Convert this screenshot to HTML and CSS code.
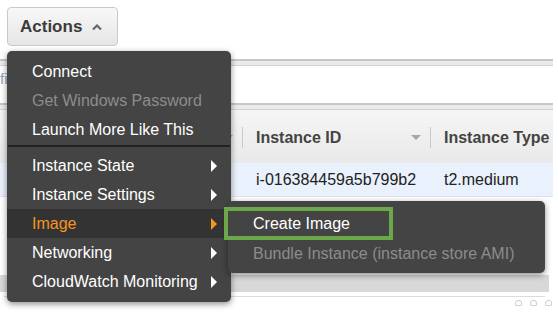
FILE: index.html
```html
<!DOCTYPE html>
<html lang="en">
<head>
    <meta charset="UTF-8">
    <title>Instances - Actions</title>
    <link rel="stylesheet" href="styles.css">
</head>
<body>
    <div class="toolbar">
        <button class="actions-button">Actions
            <svg class="caret" width="12" height="8" viewBox="0 0 12 8"><path d="M2 6.5 L6 2.5 L10 6.5" fill="none" stroke="#666" stroke-width="2.2"/></svg>
        </button>
    </div>

    <div class="bar"></div>
    <div class="filter-area"><span class="filter-text">fi</span></div>
    <div class="bar"></div>

    <!-- table -->
    <div class="table">
        <div class="head-cell">
            <span class="sort-arrow"></span>
        </div>
        <div class="head-cell">
            <span class="sep"></span>
            <span class="head-label">Instance ID</span>
            <span class="sort-arrow"></span>
        </div>
        <div class="head-cell">
            <span class="sep"></span>
            <span class="head-label">Instance Type</span>
        </div>

        <div class="row-cell"></div>
        <div class="row-cell">i-016384459a5b799b2</div>
        <div class="row-cell">t2.medium</div>
    </div>

    <div class="empty-area"></div>
    <div class="scrollbar"></div>
    <div class="grip">
        <span class="dot"></span><span class="dot"></span><span class="dot"></span>
    </div>

    <!-- dropdown menu -->
    <div class="dropdown">
        <ul class="menu">
            <li class="menu-item">Connect</li>
            <li class="menu-item disabled">Get Windows Password</li>
            <li class="menu-item">Launch More Like This</li>
            <li class="menu-sep"></li>
            <li class="menu-item">Instance State <span class="arrow"></span></li>
            <li class="menu-item">Instance Settings <span class="arrow"></span></li>
            <li class="menu-item active">Image <span class="arrow"></span></li>
            <li class="menu-item">Networking <span class="arrow"></span></li>
            <li class="menu-item">CloudWatch Monitoring <span class="arrow"></span></li>
        </ul>
        <ul class="submenu">
            <li class="sub-item selected">Create Image</li>
            <li class="sub-item disabled">Bundle Instance (instance store AMI)</li>
        </ul>
    </div>
</body>
</html>
```

FILE: styles.css
```css
body {
    margin: 0;
    font-family: 'Liberation Sans', Arial, sans-serif;
    font-size: 16px;
    background-color: #ffffff;
    color: #333;
    position: relative;
    height: 317px;
    overflow: hidden;
}

.toolbar {
    height: 59px;
    padding: 7px 0 0 7px;
    box-sizing: border-box;
}

.actions-button {
    width: 111px;
    height: 39px;
    display: flex;
    align-items: center;
    padding: 1px 0 0 12px;
    font-family: 'Liberation Sans', Arial, sans-serif;
    font-size: 17px;
    font-weight: bold;
    color: #3b3b3b;
    background: linear-gradient(#f8f8f8, #e5e5e5);
    border: 1px solid #cacaca;
    border-radius: 4px;
    box-sizing: border-box;
}

.caret {
    margin-left: 9px;
}

.bar {
    width: 553px;
    height: 7px;
    background-color: #ebebeb;
    border-top: 2px solid #c6c6c6;
    border-bottom: 1px solid #d2d2d2;
    box-sizing: border-box;
}

.filter-area {
    height: 37px;
    padding-top: 4px;
    box-sizing: border-box;
}

.filter-text {
    font-size: 15px;
    color: #8fa3b8;
}

.table {
    width: 553px;
    display: grid;
    grid-template-columns: 242px 188px 1fr;
}

.head-cell {
    height: 53px;
    display: flex;
    align-items: center;
    background: linear-gradient(#f5f5f5, #e9e9e9);
    font-weight: bold;
    color: #444;
    padding-top: 2px;
    box-sizing: border-box;
}

.sep {
    width: 1px;
    height: 21px;
    background-color: #c9c9c9;
    margin-right: 13px;
}

.sort-arrow {
    margin-left: auto;
    margin-right: 9px;
    width: 0;
    height: 0;
    border-left: 5px solid transparent;
    border-right: 5px solid transparent;
    border-top: 5px solid #a8a8a8;
}

.row-cell {
    height: 34px;
    display: flex;
    align-items: center;
    padding-left: 14px;
    background-color: #e9f1fc;
    border-bottom: 1px solid #dde3ea;
    color: #222;
    box-sizing: border-box;
}

.empty-area {
    height: 78px;
}

.scrollbar {
    width: 549px;
    height: 17px;
    background-color: #d8d8d8;
    border-bottom: 4px solid #ffffff;
    box-shadow: 0 5px 0 -4px #dcdcdc;
}

.grip {
    display: flex;
    justify-content: flex-end;
    gap: 8px;
    width: 552px;
    margin-top: 4px;
}

.dot {
    width: 5px;
    height: 4px;
    border: 1px solid #cfcfcf;
    border-radius: 3px 3px 1px 1px;
}

/* dropdown */
.dropdown {
    position: absolute;
    left: 7px;
    top: 51px;
}

.menu {
    list-style: none;
    margin: 0;
    padding: 6px 0;
    width: 224px;
    background-color: #444444;
    border-radius: 5px;
    box-shadow: 0 2px 6px rgba(0, 0, 0, 0.45);
}

.menu-item {
    height: 29px;
    display: flex;
    align-items: center;
    padding: 1px 14px 0 25px;
    box-sizing: border-box;
    color: #ffffff;
}

.menu-item.disabled {
    color: #8c8c8c;
}

.menu-item.active {
    background-color: #333333;
    color: #f7931e;
}

.menu-sep {
    height: 2px;
    background-color: #222222;
    margin: 1px 1px 4px 1px;
}

.arrow {
    margin-left: auto;
    width: 0;
    height: 0;
    border-top: 6px solid transparent;
    border-bottom: 6px solid transparent;
    border-left: 6px solid #ffffff;
}

.menu-item.active .arrow {
    border-left-color: #f7931e;
}

.submenu {
    position: absolute;
    left: 221px;
    top: 150px;
    list-style: none;
    margin: 0;
    padding: 6px 0 5px 0;
    width: 317px;
    background-color: #444444;
    border-radius: 5px;
    box-shadow: 0 2px 6px rgba(0, 0, 0, 0.45);
}

.sub-item {
    height: 28px;
    display: flex;
    align-items: center;
    padding-left: 25px;
    color: #ffffff;
}

.sub-item.selected {
    width: 169px;
    height: 33px;
    margin-left: -4px;
    border: 4px solid #6aa84a;
    box-sizing: border-box;
}

.sub-item.disabled {
    color: #8c8c8c;
}
```
